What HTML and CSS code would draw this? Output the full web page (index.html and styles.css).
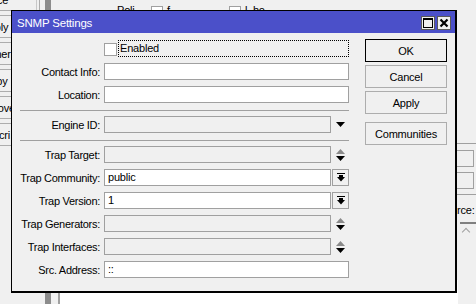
FILE: index.html
```html
<!DOCTYPE html>
<html>
<head>
<meta charset="utf-8">
<link rel="stylesheet" href="styles.css">
</head>
<body>
<div class="desk">
  <div class="bg-top">
    <span class="bg-t1">Poli</span><span class="bg-cb bg-cb1"></span><span class="bg-t2">f</span>
    <span class="bg-cb bg-cb2"></span><span class="bg-t3">l&nbsp;&nbsp;ho</span>
  </div>
  <div class="bg-left">
    <div class="bg-btn">Place</div>
    <div class="bg-btn">Apply</div>
    <div class="bg-btn">Owner</div>
    <div class="bg-btn">Copy</div>
    <div class="bg-btn">Remove</div>
    <div class="bg-btn">Descri</div>
  </div>
  <div class="bg-vline"></div>
  <div class="bg-scroll"></div>
  <div class="bg-white"></div>
  <div class="bg-right">
    <div class="bg-sep"></div>
    <div class="bg-in"></div>
    <div class="bg-in"></div>
    <div class="bg-sep"></div>
    <div class="bg-lbl">Source:</div>
    <div class="bg-list"><span class="bg-chev"></span></div>
  </div>

  <div class="dialog">
    <div class="titlebar">
      <span class="title">SNMP Settings</span>
      <div class="tb-btns">
        <span class="tb-btn"><svg width="12" height="12" viewBox="0 0 12 12"><rect x="1.5" y="1.5" width="9" height="9" fill="none" stroke="#000" stroke-width="1"/><rect x="1" y="1" width="10" height="2" fill="#000"/></svg></span>
        <span class="tb-btn"><svg width="12" height="12" viewBox="0 0 12 12"><path d="M2.5 2.5 L9.5 9.5 M9.5 2.5 L2.5 9.5" stroke="#000" stroke-width="2.2" fill="none"/></svg></span>
      </div>
    </div>
    <div class="body">
      <div class="form">
        <div class="row">
          <div class="lbl"></div>
          <div class="enabled-row">
            <span class="checkbox"></span>
            <span class="focus-lbl">Enabled</span>
          </div>
        </div>

        <div class="row">
          <div class="lbl">Contact Info:</div>
          <div class="input full"></div>
        </div>

        <div class="row">
          <div class="lbl">Location:</div>
          <div class="input full"></div>
        </div>

        <div class="sep"></div>

        <div class="row">
          <div class="lbl">Engine ID:</div>
          <div class="input dis"></div>
          <div class="ico"><svg width="9" height="5" viewBox="0 0 9 5"><path d="M0 0 H9 L4.5 5 Z" fill="#000"/></svg></div>
        </div>

        <div class="sep"></div>

        <div class="row">
          <div class="lbl">Trap Target:</div>
          <div class="input dis"></div>
          <div class="ico"><svg width="9" height="12" viewBox="0 0 9 12"><path d="M4.5 0 L9 5 H0 Z" fill="#8a8a8a"/><path d="M0 7 H9 L4.5 12 Z" fill="#000"/></svg></div>
        </div>

        <div class="row">
          <div class="lbl">Trap Community:</div>
          <div class="input">public</div>
          <div class="combo"><svg width="8" height="9" viewBox="0 0 8 9"><rect x="0" y="0" width="8" height="1" fill="#000"/><rect x="2" y="2" width="4" height="2" fill="#000"/><path d="M0 4 H8 L4 8.5 Z" fill="#000"/></svg></div>
        </div>

        <div class="row">
          <div class="lbl">Trap Version:</div>
          <div class="input">1</div>
          <div class="combo"><svg width="8" height="9" viewBox="0 0 8 9"><rect x="0" y="0" width="8" height="1" fill="#000"/><rect x="2" y="2" width="4" height="2" fill="#000"/><path d="M0 4 H8 L4 8.5 Z" fill="#000"/></svg></div>
        </div>

        <div class="row">
          <div class="lbl">Trap Generators:</div>
          <div class="input dis"></div>
          <div class="ico"><svg width="9" height="12" viewBox="0 0 9 12"><path d="M4.5 0 L9 5 H0 Z" fill="#8a8a8a"/><path d="M0 7 H9 L4.5 12 Z" fill="#000"/></svg></div>
        </div>

        <div class="row">
          <div class="lbl">Trap Interfaces:</div>
          <div class="input dis"></div>
          <div class="ico"><svg width="9" height="12" viewBox="0 0 9 12"><path d="M4.5 0 L9 5 H0 Z" fill="#8a8a8a"/><path d="M0 7 H9 L4.5 12 Z" fill="#000"/></svg></div>
        </div>

        <div class="row">
          <div class="lbl">Src. Address:</div>
          <div class="input full">::</div>
        </div>
      </div>
      <div class="buttons">
        <div class="btn default">OK</div>
        <div class="btn">Cancel</div>
        <div class="btn">Apply</div>
        <div class="btn comm">Communities</div>
      </div>
    </div>
  </div>
</div>
</body>
</html>
```
FILE: styles.css
```css
* { box-sizing: border-box; }
html, body { margin: 0; padding: 0; }
body {
  width: 476px; height: 304px; overflow: hidden;
  background: #f0f0f0;
  font-family: "Liberation Sans", Arial, sans-serif;
  font-size: 11px;
  letter-spacing: -0.2px;
  color: #000;
}
.desk { position: relative; width: 476px; height: 304px; overflow: hidden; }

/* background window fragments */
.bg-top { position: absolute; left: 0; top: 0; width: 476px; height: 12px; }
.bg-t1 { position: absolute; left: 117px; top: 4px; }
.bg-t2 { position: absolute; left: 167px; top: 4px; }
.bg-t3 { position: absolute; left: 245px; top: 4px; }
.bg-cb { position: absolute; top: 6px; width: 12px; height: 12px; border: 1px solid #a0a0a0; background: #fff; }
.bg-cb1 { left: 151px; }
.bg-cb2 { left: 229px; }
.bg-left {
  position: absolute; left: -60px; top: -12px;
  display: flex; flex-direction: column; gap: 4px;
}
.bg-btn {
  width: 100px; height: 23px; border: 1px solid #adadad; background: #f0f0f0;
  display: flex; align-items: center; justify-content: center; padding-left: 10px;
}
.bg-vline { position: absolute; left: 36px; top: 0; width: 1px; height: 12px; background: #fff; border-right: 1px solid #c8c8c8; }
.bg-scroll { position: absolute; left: 45px; top: 0; width: 6px; height: 304px; background: #8c8c8c; }
.bg-white { position: absolute; left: 58px; top: 280px; width: 400px; height: 30px; background: #fff; border-left: 2px solid #a0a0a0; }
.bg-right { position: absolute; left: 440px; top: 143px; width: 40px; display: flex; flex-direction: column; }
.bg-sep { height: 1px; background: #a0a0a0; margin-bottom: 6px; }
.bg-in { height: 17px; width: 34px; border: 1px solid #a0a0a0; background: #f0f0f0; margin-bottom: 5px; }
.bg-lbl { margin-top: 3px; height: 14px; margin-left: -2px; }
.bg-list { margin-top: 4px; height: 100px; border-top: 2px solid #808080; background: #f0f0f0; position: relative; margin-left: 20px; }
.bg-chev { position: absolute; left: 3px; top: 5px; width: 6px; height: 6px; border-left: 1px solid #a0a0a0; border-top: 1px solid #a0a0a0; transform: rotate(45deg); }

/* dialog */
.dialog {
  position: absolute; left: 11px; top: 10px; width: 446px; height: 283px;
  background: #f0f0f0;
  border-style: solid; border-color: #000; border-width: 1px 2px 2px 1px;
}
.titlebar {
  height: 22px; background: #4b50c9;
  display: flex; align-items: center; justify-content: space-between;
  padding: 0 4px 0 5px;
}
.title { color: #fff; font-size: 11.5px; letter-spacing: -0.2px; padding-top: 1px; }
.tb-btns { display: flex; gap: 2px; margin-top: 1px; }
.tb-btn {
  width: 14px; height: 14px; background: #f0f0f0; border: 1px solid #5a5a5a;
  display: flex; align-items: center; justify-content: center;
}
.body { display: flex; padding: 7px 0 0 8px; }
.form { display: flex; flex-direction: column; gap: 6px; }
.row {
  display: grid;
  grid-template-columns: 84px 227px 18px;
  height: 17px;
  align-items: center;
}
.lbl { text-align: right; padding-right: 4px; white-space: nowrap; letter-spacing: -0.28px; }
.enabled-row { grid-column: 2 / 4; display: flex; align-items: center; height: 17px; }
.checkbox { width: 13px; height: 13px; border: 1px solid #a0a0a0; background: #fff; margin-top: 1px; }
.focus-lbl { margin-left: 1px; flex: 1; height: 17px; border: 1px dotted #000; padding-left: 1px; line-height: 15px; }
.input {
  height: 17px; border: 1px solid #a0a0a0; background: #fff;
  padding-left: 3px; line-height: 15px;
}
.input.full { grid-column: 2 / 4; }
.input.dis { background: #f0f0f0; }
.ico { display: flex; justify-content: center; align-items: center; height: 17px; padding-left: 1px; }
.combo {
  margin-left: 1px; height: 17px; border: 1px solid #a0a0a0; background: #f0f0f0;
  display: flex; align-items: center; justify-content: center;
}
.sep { height: 1px; background: #a0a0a0; margin: 1px 0 -1px; }
.buttons { display: flex; flex-direction: column; gap: 3px; margin-left: 16px; margin-top: -1px; }
.btn {
  width: 82px; height: 23px; border: 1px solid #adadad; background: #f0f0f0;
  display: flex; align-items: center; justify-content: center;
}
.btn.default { border-color: #000; }
.btn.comm { margin-top: 5px; }
```
